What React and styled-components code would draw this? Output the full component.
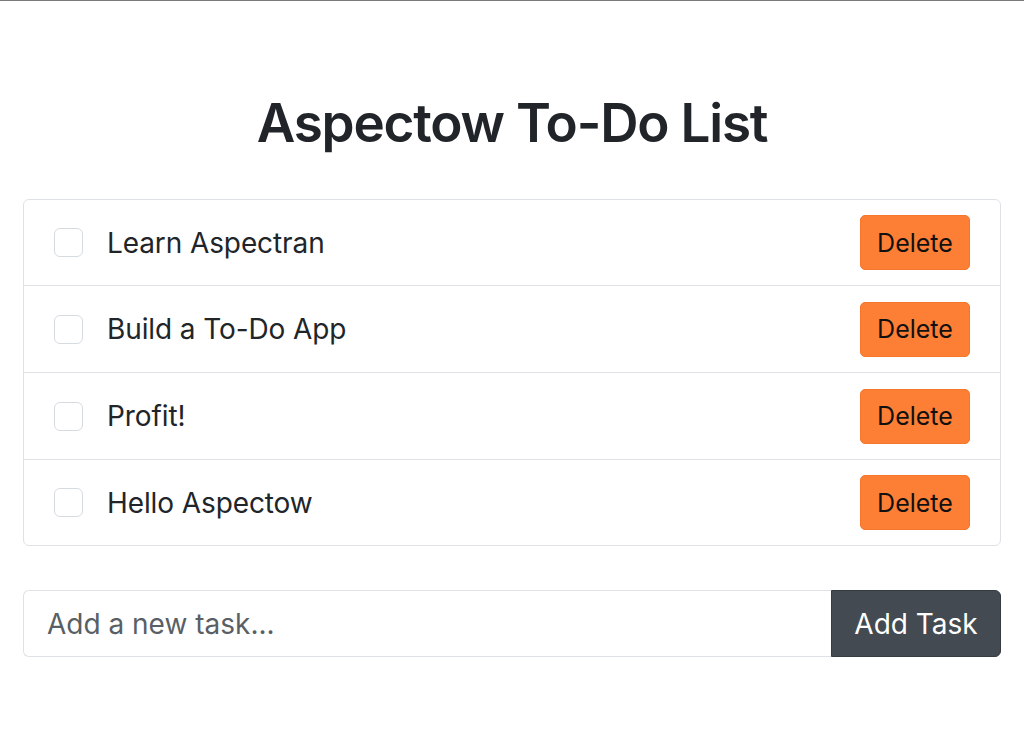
import React, { useState } from "react";
import styled, { createGlobalStyle } from "styled-components";

const GlobalStyle = createGlobalStyle`
  html, body { margin: 0; padding: 0; background: #fff; }
  body {
    font-family: Inter, "Noto Sans", "Liberation Sans", sans-serif;
    color: #212529;
  }
  * { box-sizing: border-box; }
`;

const Page = styled.div`
  min-height: 731px;
  border-top: 1px solid #7a7a7a;
  padding: 90px 23px 0 23px;
`;

const Title = styled.h1`
  margin: 0 0 43px 0;
  text-align: center;
  font-size: 53px;
  line-height: 65px;
  font-weight: 600;
  letter-spacing: -1.2px;
  color: #212529;
`;

const List = styled.ul`
  list-style: none;
  margin: 0;
  padding: 0;
  border: 1px solid #dee2e6;
  border-radius: 6px;
`;

const Item = styled.li`
  display: flex;
  align-items: center;
  height: ${(p) => (p.$first ? "85px" : p.$last ? "86px" : "87px")};
  padding: 0 30px;
  border-top: ${(p) => (p.$first ? "none" : "1px solid #dee2e6")};
`;

const Check = styled.input.attrs({ type: "checkbox" })`
  appearance: none;
  margin: 0 24px 0 0;
  width: 29px;
  height: 29px;
  border: 1.5px solid #d6dbe0;
  border-radius: 6px;
  background: #fff;
  flex: none;
`;

const Label = styled.span`
  flex: 1;
  font-size: 28px;
  letter-spacing: -0.1px;
  color: #212529;
`;

const DeleteButton = styled.button`
  width: 110px;
  height: 55px;
  background: #fd7e35;
  border: 1px solid #f4772c;
  border-radius: 5px;
  color: #111;
  font-family: inherit;
  font-size: 25px;
  padding: 0;
`;

const Form = styled.div`
  display: flex;
  margin-top: 44px;
  height: 67px;
`;

const Input = styled.input`
  flex: 1;
  min-width: 0;
  height: 100%;
  border: 1px solid #dee2e6;
  border-right: none;
  border-radius: 6px 0 0 6px;
  padding: 0 23px;
  font-family: inherit;
  font-size: 28px;
  color: #212529;
  outline: none;
  &::placeholder { color: #595f65; }
`;

const AddButton = styled.button`
  width: 170px;
  height: 100%;
  background: #434a51;
  border: 1px solid #353b40;
  border-radius: 0 6px 6px 0;
  color: #fff;
  font-family: inherit;
  font-size: 28px;
  padding: 0;
`;

const tasks = ["Learn Aspectran", "Build a To-Do App", "Profit!", "Hello Aspectow"];

export default function App() {
  const [value, setValue] = useState("");
  return (
    <>
      <GlobalStyle />
      <Page>
        <Title>Aspectow To-Do List</Title>
        <List>
          {tasks.map((t, i) => (
            <Item key={t} $first={i === 0} $last={i === tasks.length - 1}>
              <Check />
              <Label>{t}</Label>
              <DeleteButton>Delete</DeleteButton>
            </Item>
          ))}
        </List>
        <Form>
          <Input
            placeholder="Add a new task..."
            value={value}
            onChange={(e) => setValue(e.target.value)}
          />
          <AddButton>Add Task</AddButton>
        </Form>
      </Page>
    </>
  );
}
